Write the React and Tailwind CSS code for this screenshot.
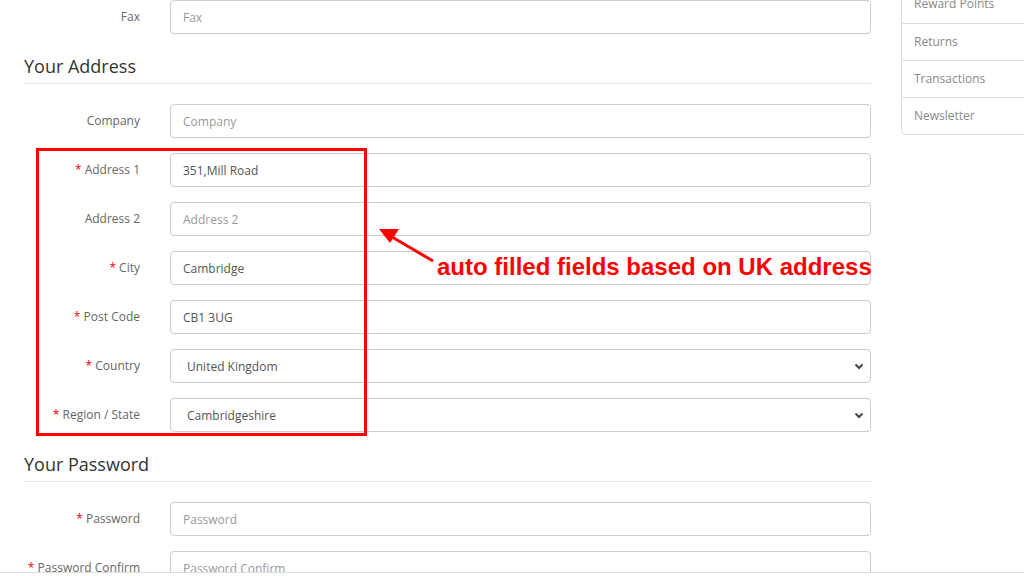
import React from "react";

const font = { fontFamily: '"Open Sans", "Liberation Sans", sans-serif' };

function Label({ text, required }) {
	return (
		<label className="w-[116px] shrink-0 text-right text-[12px] text-[#666]">
			{required && <span className="text-[#f00]">* </span>}
			{text}
		</label>
	);
}

function TextRow({ label, required, value, placeholder }) {
	return (
		<div className="flex h-[34px] items-center gap-[30px]">
			<Label text={label} required={required} />
			<input
				readOnly
				defaultValue={value}
				placeholder={placeholder}
				className="h-[34px] w-[701px] rounded-[4px] border border-[#ccc] bg-white px-[12px] text-[12px] text-[#555] outline-none placeholder:text-[#999]"
			/>
		</div>
	);
}

function SelectRow({ label, value }) {
	return (
		<div className="flex h-[34px] items-center gap-[30px]">
			<Label text={label} required />
			<div className="relative w-[701px]">
				<select
					defaultValue={value}
					className="h-[34px] w-full appearance-none rounded-[4px] border border-[#ccc] bg-white pl-[16px] pt-[1px] text-[12px] text-[#555] outline-none"
				>
					<option>{value}</option>
				</select>
				<svg
					className="pointer-events-none absolute right-[7px] top-[14px]"
					width="10"
					height="7"
					viewBox="0 0 10 7"
				>
					<path d="M1.5 1.5 L5 5 L8.5 1.5" fill="none" stroke="#444" strokeWidth="2" />
				</svg>
			</div>
		</div>
	);
}

function Legend({ children }) {
	return (
		<div className="mt-[22px] h-[28px] border-b border-[#e5e5e5] pb-[6px] text-[18px] leading-[21px] text-[#333]">
			{children}
		</div>
	);
}

export default function App() {
	const links = ["Reward Points", "Returns", "Transactions", "Newsletter"];
	return (
		<div
			className="relative h-[573px] w-[1024px] overflow-hidden border-b border-[#ddd] bg-white"
			style={font}
		>
			<div className="flex">
				<div className="ml-[24px] flex w-[847px] flex-col">
					<TextRow label="Fax" placeholder="Fax" />
					<Legend>Your Address</Legend>
					<div className="mt-[20px] flex flex-col gap-[15px]">
						<TextRow label="Company" placeholder="Company" />
						<TextRow label="Address 1" required value="351,Mill Road" placeholder="Address 1" />
						<TextRow label="Address 2" placeholder="Address 2" />
						<TextRow label="City" required value="Cambridge" placeholder="City" />
						<TextRow label="Post Code" required value="CB1 3UG" placeholder="Post Code" />
						<SelectRow label="Country" value="United Kingdom" />
						<SelectRow label="Region / State" value="Cambridgeshire" />
					</div>
					<Legend>Your Password</Legend>
					<div className="mt-[20px] flex flex-col gap-[15px]">
						<TextRow label="Password" required placeholder="Password" />
						<TextRow label="Password Confirm" required placeholder="Password Confirm" />
					</div>
				</div>
				<div className="ml-[30px] mt-[-15px] w-[140px] shrink-0 self-start rounded-[4px] border border-[#ddd]">
					{links.map((l, i) => (
						<div
							key={l}
							className={`h-[37px] pl-[12px] text-[12px] leading-[36px] text-[#888] ${i > 0 ? "border-t border-[#ddd]" : ""}`}
						>
							{l}
						</div>
					))}
				</div>
			</div>

			<div className="absolute left-[36px] top-[148px] h-[288px] w-[331px] border-[3px] border-[#f00]" />
			<svg className="absolute left-0 top-0" width="1024" height="573">
				<line x1="433" y1="261" x2="392" y2="237" stroke="#f00" strokeWidth="3" />
				<polygon points="379,229 399,229 390,243" fill="#f00" />
			</svg>
			<div
				className="absolute left-[437px] top-[252px] text-[24px] font-bold leading-[30px] text-[#f00]"
				style={{ fontFamily: '"Liberation Sans", Arial, sans-serif' }}
			>
				auto filled fields based on UK address
			</div>
		</div>
	);
}
